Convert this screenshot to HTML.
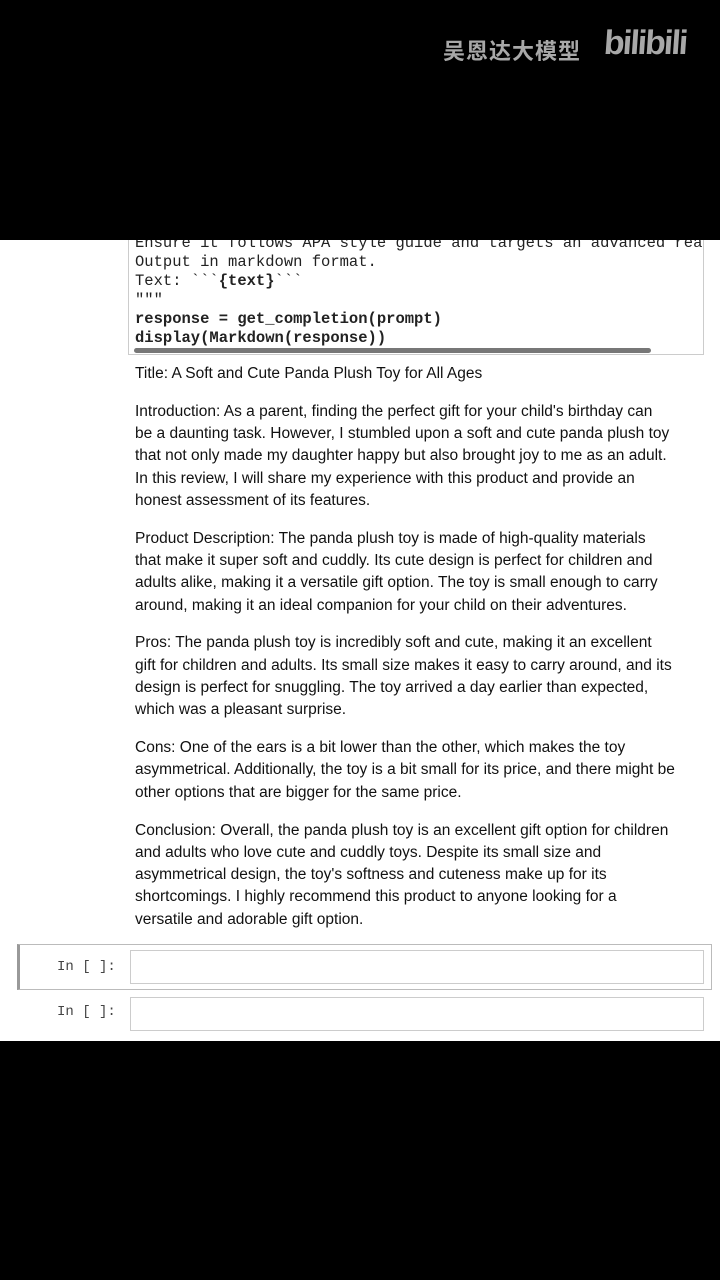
<!DOCTYPE html>
<html><head><meta charset="utf-8"><style>
body{margin:0;width:720px;height:1280px;background:#000;position:relative;overflow:hidden;font-family:"Liberation Sans",sans-serif}
.wm{position:absolute;left:443px;top:34px;color:#a8a8a8;font:bold 22px "Liberation Sans","Noto Sans CJK SC",sans-serif;letter-spacing:1px}
.bl{position:absolute;left:604px;top:24px;color:#a8a8a8;font:bold 34px "Liberation Sans",sans-serif;letter-spacing:-2px;transform:skewX(-4deg)}
.page{position:absolute;left:0;top:240px;width:720px;height:801px;background:#fff;overflow:hidden}
.code{position:absolute;left:128px;top:-8px;width:574px;height:122px;border:1px solid #ccc;border-top:none;overflow:hidden;background:#fff}
.code pre{margin:0;position:absolute;left:6px;top:2px;font:15.5px/19px "Liberation Mono",monospace;color:#222;white-space:pre}
.sb{position:absolute;left:5px;top:116px;width:517px;height:5px;background:#777;border-radius:3px}
.out{position:absolute;left:135px;top:123px;font-size:15.5px;line-height:22.3px;color:#111}
.out p{margin:0 0 15.5px 0}
.cell{position:absolute;left:17px;width:691px;height:44px}
.c1{top:704px;border:1px solid #bbb;border-left:3px solid #999}
.lab{position:absolute;left:57px;font:14px "Liberation Mono",monospace;color:#444}
.inp{position:absolute;left:130px;width:572px;height:32px;border:1px solid #ccc;background:#fff}
</style></head><body>
<div class="wm">吴恩达大模型</div><div class="bl">bilibili</div>
<div class="page">
<div class="code"><pre>Ensure it follows APA style guide and targets an advanced rea
Output in markdown format.
Text: &#96;&#96;&#96;<b>{text}</b>&#96;&#96;&#96;
"""
<b>response = get_completion(prompt)
display(Markdown(response))</b></pre><div class="sb"></div></div>
<div class="out">
<p>Title: A Soft and Cute Panda Plush Toy for All Ages</p>
<p>Introduction: As a parent, finding the perfect gift for your child's birthday can<br>be a daunting task. However, I stumbled upon a soft and cute panda plush toy<br>that not only made my daughter happy but also brought joy to me as an adult.<br>In this review, I will share my experience with this product and provide an<br>honest assessment of its features.</p>
<p>Product Description: The panda plush toy is made of high-quality materials<br>that make it super soft and cuddly. Its cute design is perfect for children and<br>adults alike, making it a versatile gift option. The toy is small enough to carry<br>around, making it an ideal companion for your child on their adventures.</p>
<p>Pros: The panda plush toy is incredibly soft and cute, making it an excellent<br>gift for children and adults. Its small size makes it easy to carry around, and its<br>design is perfect for snuggling. The toy arrived a day earlier than expected,<br>which was a pleasant surprise.</p>
<p>Cons: One of the ears is a bit lower than the other, which makes the toy<br>asymmetrical. Additionally, the toy is a bit small for its price, and there might be<br>other options that are bigger for the same price.</p>
<p>Conclusion: Overall, the panda plush toy is an excellent gift option for children<br>and adults who love cute and cuddly toys. Despite its small size and<br>asymmetrical design, the toy's softness and cuteness make up for its<br>shortcomings. I highly recommend this product to anyone looking for a<br>versatile and adorable gift option.</p>
</div>
<div class="cell c1"></div>
<div class="lab" style="top:719px">In [ ]:</div>
<div class="inp" style="top:710px"></div>
<div class="lab" style="top:764px">In [ ]:</div>
<div class="inp" style="top:757px"></div>
</div>
</body></html>
